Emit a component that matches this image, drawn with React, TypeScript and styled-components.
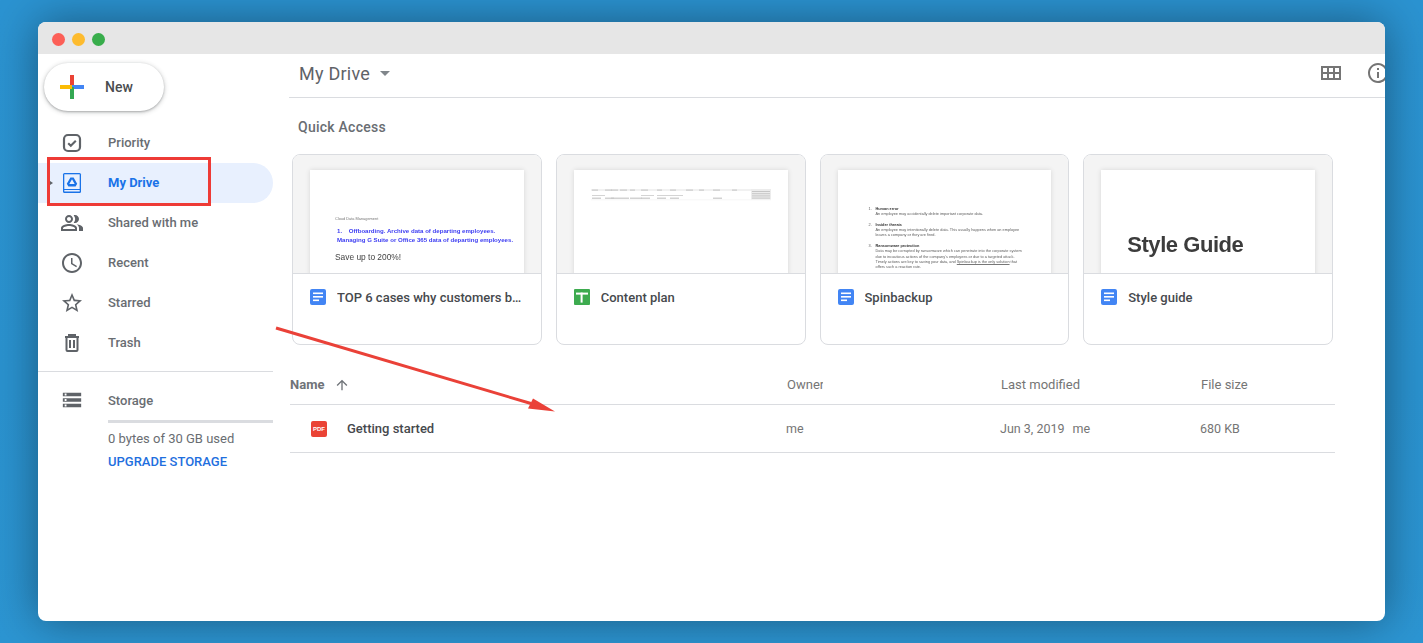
import React from "react";
import styled, { createGlobalStyle, css } from "styled-components";
import {
  MdAccessTime,
  MdArrowUpward,
  MdInfoOutline,
  MdOutlinePeopleAlt,
  MdStarBorder,
  MdStorage,
} from "react-icons/md";

const GlobalStyle = createGlobalStyle`
  html, body {
    margin: 0;
    height: 100%;
    overflow: hidden;
    font-family: Roboto, "Liberation Sans", sans-serif;
  }
`;

const Page = styled.div`
  width: 1423px;
  height: 643px;
  box-sizing: border-box;
  padding: 22px 38px;
  background: linear-gradient(180deg, #2b93d1 0%, #2a92cf 60%, #2c95d2 100%);
`;

const Window = styled.div`
  position: relative;
  height: 599px;
  background: #fff;
  border-radius: 8px;
  overflow: hidden;
  display: flex;
  flex-direction: column;
  box-shadow: 0 0 45px rgba(0, 0, 0, 0.4);
`;

const TitleBar = styled.div`
  height: 32px;
  flex: none;
  background: #e6e6e6;
  display: flex;
  align-items: center;
  gap: 7px;
  padding-left: 14px;
  padding-top: 2px;
  box-sizing: border-box;
`;

const Light = styled.span<{ $color: string }>`
  width: 13px;
  height: 13px;
  border-radius: 50%;
  background: ${(p) => p.$color};
`;

const Body = styled.div`
  flex: 1;
  display: flex;
  min-height: 0;
`;

const Sidebar = styled.aside`
  width: 235px;
  flex: none;
`;

const NewButton = styled.button`
  margin: 9px 0 12px 6px;
  width: 120px;
  height: 48px;
  border: 0;
  border-radius: 24px;
  background: #fff;
  box-shadow: 0 1px 2px rgba(60, 64, 67, 0.3), 0 1px 4px 1px rgba(60, 64, 67, 0.2);
  display: flex;
  align-items: center;
  gap: 21px;
  padding: 0 0 0 16px;
  font: 500 14px Roboto, sans-serif;
  color: #4a4d50;
`;

const NavList = styled.nav`
  display: flex;
  flex-direction: column;
`;

const NavItem = styled.div<{ $active?: boolean }>`
  height: 40px;
  display: flex;
  align-items: center;
  padding-left: 22px;
  gap: 24px;
  font-size: 13px;
  font-weight: ${(p) => (p.$active ? 700 : 500)};
  color: ${(p) => (p.$active ? "#1a73e8" : "#696d72")};
  background: ${(p) => (p.$active ? "#e8f0fe" : "transparent")};
  border-radius: ${(p) => (p.$active ? "0 20px 20px 0" : "0")};
`;

const NavLabel = styled.span`
  padding-bottom: 2px;
`;

const NavIcon = styled.span<{ $size?: number }>`
  width: 24px;
  height: 24px;
  display: flex;
  align-items: center;
  justify-content: center;
  font-size: ${(p) => p.$size ?? 24}px;
  color: #5f6368;
`;

const StorageBlock = styled.div`
  margin-top: 8px;
  border-top: 1px solid #dadce0;
  padding-top: 16px;
`;

const StorageRow = styled.div`
  display: flex;
  align-items: center;
  padding-left: 22px;
  gap: 24px;
  height: 24px;
  font-size: 13px;
  font-weight: 500;
  color: #696d72;
`;

const StorageBar = styled.div`
  margin: 8px 0 0 70px;
  height: 3px;
  background: #dadce0;
`;

const StorageUsed = styled.div`
  margin: 8px 0 0 70px;
  font-size: 13px;
  line-height: 15px;
  color: #696d72;
`;

const UpgradeLink = styled.div`
  margin: 8px 0 0 70px;
  font-size: 13px;
  line-height: 15px;
  font-weight: 500;
  color: #1f6fde;
  white-space: nowrap;
`;

const Main = styled.main`
  flex: 1;
  min-width: 0;
  padding-left: 16px;
`;

const Header = styled.header`
  height: 44px;
  box-sizing: border-box;
  border-bottom: 1px solid #dadce0;
  display: flex;
  align-items: center;
  padding: 0 0 5px 10px;
`;

const HeaderTitle = styled.h1`
  margin: 0;
  font-size: 18px;
  font-weight: 400;
  letter-spacing: 0.25px;
  color: #5f6368;
`;

const Caret = styled.span`
  margin-left: 10px;
  width: 0;
  height: 0;
  border-left: 5px solid transparent;
  border-right: 5px solid transparent;
  border-top: 5px solid #80868b;
`;

const HeaderActions = styled.div`
  margin-left: auto;
  display: flex;
  align-items: center;
  gap: 25px;
  margin-right: -5px;
  color: #757575;
`;

const InfoIcon = styled(MdInfoOutline)`
  font-size: 24px;
`;

const SectionTitle = styled.h2`
  margin: 21px 0 18px 9px;
  font-size: 14px;
  line-height: 17px;
  font-weight: 500;
  letter-spacing: 0.25px;
  color: #696d72;
`;

const Cards = styled.div`
  margin-left: 3px;
  width: 1041px;
  display: grid;
  grid-template-columns: repeat(4, 1fr);
  gap: 14px;
`;

const Card = styled.article`
  height: 191px;
  box-sizing: border-box;
  border: 1px solid #dadce0;
  border-radius: 8px;
  overflow: hidden;
  display: flex;
  flex-direction: column;
`;

const Preview = styled.div`
  height: 118px;
  flex: none;
  background: #f4f4f4;
  padding: 15px 17px 0;
  box-sizing: border-box;
  overflow: hidden;
`;

const Paper = styled.div<{ $top: number; $left: number }>`
  height: 120px;
  box-sizing: border-box;
  background: #fff;
  box-shadow: 0 0 5px rgba(0, 0, 0, 0.12);
  padding: ${(p) => p.$top}px 8px 0 ${(p) => p.$left}px;
  overflow: hidden;
  font-family: "Liberation Sans", sans-serif;
`;

const softText = css`
  filter: blur(0.25px);
`;

const TinyLabel = styled.div`
  ${softText}
  font-size: 3.9px;
  line-height: 6px;
  color: #777;
  white-space: nowrap;
`;

const BlueLine = styled.div`
  ${softText}
  font-size: 6.1px;
  line-height: 9px;
  font-weight: 700;
  color: #3d3df2;
  white-space: nowrap;
`;

const BlueBlock = styled.div`
  margin: 4px 0 8px 2px;
`;

const SaveLine = styled.div`
  ${softText}
  font-size: 8.4px;
  line-height: 11px;
  color: #444;
`;

const DocItem = styled.div`
  ${softText}
  display: flex;
  font-size: 3.85px;
  line-height: 5.3px;
  color: #5c5c5c;
  margin-bottom: 5.3px;
  white-space: nowrap;

  b {
    color: #333;
  }

  u {
    text-decoration-thickness: 0.4px;
    text-decoration-color: #777;
  }
`;

const DocNumber = styled.span`
  width: 7px;
  flex: none;
`;

const StyleHeading = styled.div`
  ${softText}
  font-size: 22px;
  line-height: 26px;
  font-weight: 700;
  letter-spacing: -0.45px;
  color: #3c3c3c;
`;

const Footer = styled.div`
  flex: 1;
  border-top: 1px solid #dadce0;
  display: flex;
  align-items: flex-start;
  gap: 11px;
  padding: 15px 16px 0 17px;
  min-width: 0;
`;

const CardTitle = styled.div`
  margin-top: 1px;
  font-size: 13px;
  line-height: 16px;
  font-weight: 500;
  color: #46494d;
  white-space: nowrap;
  overflow: hidden;
  text-overflow: ellipsis;
  min-width: 0;
`;

const FileBadge = styled.svg`
  flex: none;
`;

const TableGrid = styled.div`
  display: grid;
  grid-template-columns: 496px 214px 200px 135px;
  width: 1045px;
  margin-left: 1px;
  align-items: center;
  border-bottom: 1px solid #dadce0;
`;

const TableHead = styled(TableGrid)`
  margin-top: 20px;
  height: 39px;
  font-size: 13px;
  font-weight: 400;
  color: #757575;
`;

const HeadCell = styled.div`
  margin-left: 1px;
`;

const TableRow = styled(TableGrid)`
  height: 47px;
  font-size: 12.5px;
  color: #757575;
`;

const NameHead = styled.div`
  display: flex;
  align-items: center;
  gap: 10px;
  font-size: 13px;
  color: #6f7378;
  font-weight: 700;
`;

const OwnerHead = styled(HeadCell)`
  width: 36px;
  overflow: hidden;
`;

const NameCell = styled.div`
  display: flex;
  align-items: center;
  padding-left: 21px;
  gap: 20px;
  font-size: 13px;
  font-weight: 500;
  color: #46494d;
`;

const PdfBadge = styled.span`
  width: 16px;
  height: 16px;
  border-radius: 2px;
  background: #ea4335;
  color: #fff;
  font: 700 6px "Liberation Sans", sans-serif;
  display: flex;
  align-items: center;
  justify-content: center;
`;

const ModifiedCell = styled.div`
  display: flex;
  gap: 8px;
`;

const RedBox = styled.div`
  position: absolute;
  left: 9px;
  top: 135px;
  width: 164px;
  height: 49px;
  box-sizing: border-box;
  border: 3px solid #ee3b36;
`;

const TreeCaret = styled.span`
  position: absolute;
  left: 12px;
  top: 159px;
  width: 0;
  height: 0;
  border-top: 2.5px solid transparent;
  border-bottom: 2.5px solid transparent;
  border-left: 3px solid #5f6368;
  z-index: 1;
`;

const ArrowOverlay = styled.svg`
  position: absolute;
  left: 230px;
  top: 296px;
  pointer-events: none;
`;

const PlusIcon = () => (
  <svg width="24" height="24" viewBox="0 0 24 24">
    <rect x="10" y="0" width="4" height="12" fill="#ea4335" />
    <rect x="12" y="10" width="12" height="4" fill="#4285f4" />
    <rect x="10" y="12" width="4" height="12" fill="#34a853" />
    <rect x="0" y="10" width="12" height="4" fill="#fbbc04" />
  </svg>
);

const PriorityIcon = () => (
  <svg width="24" height="24" viewBox="0 0 24 24" fill="none">
    <rect x="4" y="4" width="16" height="16" rx="4" stroke="#5f6368" strokeWidth="2.2" />
    <path d="M8.2 12.2l2.6 2.6 5-5" stroke="#5f6368" strokeWidth="2.1" />
  </svg>
);

const DriveIcon = () => (
  <svg width="24" height="24" viewBox="0 0 24 24">
    <rect x="3" y="2" width="18" height="20" rx="1.5" fill="#1a73e8" />
    <rect x="4.3" y="3.3" width="15.4" height="14.7" fill="#e8f0fe" />
    <rect x="4.3" y="19" width="15.4" height="1.5" fill="#e8f0fe" />
    <path
      d="M10.4 6.5h3.2l3.6 6.3-1.6 2.7H8.4l-1.6-2.7zM12 8.3l-2.7 4.6h5.4z"
      fill="#1a73e8"
      fillRule="evenodd"
    />
  </svg>
);

const TrashIcon = () => (
  <svg width="24" height="24" viewBox="0 0 24 24" fill="none" stroke="#5f6368" strokeWidth="2">
    <path d="M5 6h14M9 5.5V4h6v1.5" />
    <rect x="6.5" y="6" width="11" height="14" rx="1" />
    <path d="M10 9v8M14 9v8" />
  </svg>
);

const GridIcon = () => (
  <svg width="20" height="14" viewBox="0 0 20 14">
    <path
      fillRule="evenodd"
      d="M0 0h20v14H0zM2 2v4h4V2zm6 0v4h4V2zm6 0v4h4V2zM2 8v4h4V8zm6 0v4h4V8zm6 0v4h4V8z"
      fill="#757575"
    />
  </svg>
);

const DocIcon = () => (
  <FileBadge width="16" height="16" viewBox="0 0 16 16">
    <rect width="16" height="16" rx="2" fill="#4285f4" />
    <rect x="3" y="3.5" width="10" height="1.6" fill="#fff" />
    <rect x="3" y="7" width="10" height="1.6" fill="#fff" />
    <rect x="3" y="10.5" width="6" height="1.6" fill="#fff" />
  </FileBadge>
);

const SheetIcon = () => (
  <FileBadge width="16" height="16" viewBox="0 0 16 16">
    <rect width="16" height="16" rx="1" fill="#3dab4f" />
    <rect x="2" y="3.6" width="12" height="2" fill="#fff" />
    <rect x="6.6" y="3.6" width="2" height="10" fill="#fff" />
  </FileBadge>
);

const sheetColumns = [1, 14, 20, 29, 39, 50, 66, 79, 95, 108, 122, 141];

const SheetPreview = () => (
  <svg width="180" height="14" viewBox="0 0 180 14">
    <rect x="0" y="0" width="180" height="2" fill="#f1f1f1" />
    {sheetColumns.map((x) => (
      <rect key={x} x={x} y="0.6" width={Math.min(7, 5 + (x % 3))} height="1" fill="#c4c4c4" />
    ))}
    {[1, 14, 20, 29, 39, 50, 66, 79, 122].map((x, i) => (
      <rect key={x} x={x} y="8.6" width={i === 4 ? 12 : 9} height="1.2" fill="#c8c8c8" />
    ))}
    {[1, 50, 66, 79].map((x) => (
      <rect key={x} x={x} y="6" width="13" height="1" fill="#d4d4d4" />
    ))}
    <rect x="160" y="0" width="20" height="10.5" fill="#ececec" />
    {[2, 4.2, 6.4, 8.6].map((y) => (
      <rect key={y} x="161" y={y} width="18" height="1" fill="#c6c6c6" />
    ))}
    <rect x="0" y="10.6" width="180" height="0.6" fill="#f0f0f0" />
  </svg>
);

const SheetWrap = styled.div`
  margin-right: -8px;
`;

const navItems = [
  { label: "Shared with me", icon: <MdOutlinePeopleAlt /> },
  { label: "Recent", icon: <MdAccessTime /> },
  { label: "Starred", icon: <MdStarBorder /> },
  { label: "Trash", icon: <TrashIcon /> },
];

export default function App() {
  return (
    <>
      <GlobalStyle />
      <Page>
        <Window>
          <TitleBar>
            <Light $color="#fc5f57" />
            <Light $color="#fdbb2e" />
            <Light $color="#38ad4b" />
          </TitleBar>
          <Body>
            <Sidebar>
              <NewButton>
                <PlusIcon />
                New
              </NewButton>
              <NavList>
                <NavItem>
                  <NavIcon>
                    <PriorityIcon />
                  </NavIcon>
                  <NavLabel>Priority</NavLabel>
                </NavItem>
                <NavItem $active>
                  <NavIcon>
                    <DriveIcon />
                  </NavIcon>
                  <NavLabel>My Drive</NavLabel>
                </NavItem>
                {navItems.map((item) => (
                  <NavItem key={item.label}>
                    <NavIcon>{item.icon}</NavIcon>
                    <NavLabel>{item.label}</NavLabel>
                  </NavItem>
                ))}
              </NavList>
              <StorageBlock>
                <StorageRow>
                  <NavIcon $size={22}>
                    <MdStorage />
                  </NavIcon>
                  Storage
                </StorageRow>
                <StorageBar />
                <StorageUsed>0 bytes of 30 GB used</StorageUsed>
                <UpgradeLink>UPGRADE STORAGE</UpgradeLink>
              </StorageBlock>
            </Sidebar>
            <Main>
              <Header>
                <HeaderTitle>My Drive</HeaderTitle>
                <Caret />
                <HeaderActions>
                  <GridIcon />
                  <InfoIcon />
                </HeaderActions>
              </Header>
              <SectionTitle>Quick Access</SectionTitle>
              <Cards>
                <Card>
                  <Preview>
                    <Paper $top={46} $left={25}>
                      <TinyLabel>Cloud Data Management</TinyLabel>
                      <BlueBlock>
                        <BlueLine>1.&nbsp;&nbsp;&nbsp; Offboarding. Archive data of departing employees.</BlueLine>
                        <BlueLine>Managing G Suite or Office 365 data of departing employees.</BlueLine>
                      </BlueBlock>
                      <SaveLine>Save up to 200%!</SaveLine>
                    </Paper>
                  </Preview>
                  <Footer>
                    <DocIcon />
                    <CardTitle>TOP 6 cases why customers back up</CardTitle>
                  </Footer>
                </Card>
                <Card>
                  <Preview>
                    <Paper $top={19} $left={17}>
                      <SheetWrap>
                        <SheetPreview />
                      </SheetWrap>
                    </Paper>
                  </Preview>
                  <Footer>
                    <SheetIcon />
                    <CardTitle>Content plan</CardTitle>
                  </Footer>
                </Card>
                <Card>
                  <Preview>
                    <Paper $top={37} $left={31}>
                      <DocItem>
                        <DocNumber>1.</DocNumber>
                        <div>
                          <b>Human error</b>
                          <br />
                          An employee may accidentally delete important corporate data.
                        </div>
                      </DocItem>
                      <DocItem>
                        <DocNumber>2.</DocNumber>
                        <div>
                          <b>Insider threats</b>
                          <br />
                          An employee may intentionally delete data. This usually happens when an employee
                          <br />
                          leaves a company or they are fired.
                        </div>
                      </DocItem>
                      <DocItem>
                        <DocNumber>3.</DocNumber>
                        <div>
                          <b>Ransomware protection</b>
                          <br />
                          Data may be corrupted by ransomware which can penetrate into the corporate system
                          <br />
                          due to incautious actions of the company's employees or due to a targeted attack.
                          <br />
                          Timely actions are key to saving your data, and <u>Spinbackup is the only solution</u> that
                          <br />
                          offers such a reaction rate.
                        </div>
                      </DocItem>
                    </Paper>
                  </Preview>
                  <Footer>
                    <DocIcon />
                    <CardTitle>Spinbackup</CardTitle>
                  </Footer>
                </Card>
                <Card>
                  <Preview>
                    <Paper $top={62} $left={26}>
                      <StyleHeading>Style Guide</StyleHeading>
                    </Paper>
                  </Preview>
                  <Footer>
                    <DocIcon />
                    <CardTitle>Style guide</CardTitle>
                  </Footer>
                </Card>
              </Cards>
              <TableHead>
                <NameHead>
                  Name
                  <MdArrowUpward size={16} />
                </NameHead>
                <OwnerHead>Owner</OwnerHead>
                <HeadCell>Last modified</HeadCell>
                <HeadCell>File size</HeadCell>
              </TableHead>
              <TableRow>
                <NameCell>
                  <PdfBadge>PDF</PdfBadge>
                  Getting started
                </NameCell>
                <div>me</div>
                <ModifiedCell>
                  <span>Jun 3, 2019</span>
                  <span>me</span>
                </ModifiedCell>
                <div>680 KB</div>
              </TableRow>
            </Main>
          </Body>
          <TreeCaret />
          <RedBox />
          <ArrowOverlay width="300" height="100" viewBox="0 0 300 100">
            <path d="M8 10L263 85.5" stroke="#ea4138" strokeWidth="3" fill="none" />
            <path d="M287 93.5L260 90.5L265 80.5z" fill="#ea4138" />
          </ArrowOverlay>
        </Window>
      </Page>
    </>
  );
}
